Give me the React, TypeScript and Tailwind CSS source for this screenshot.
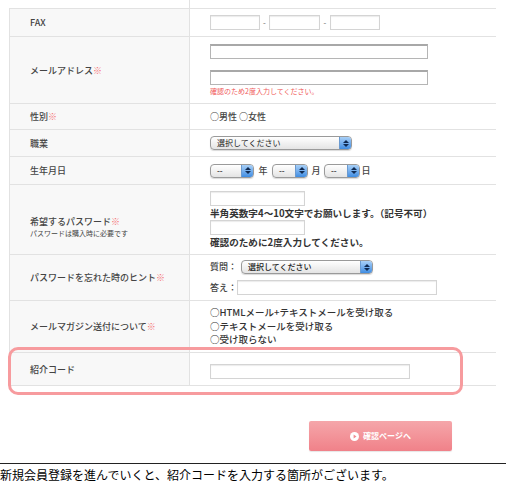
import { ReactNode } from 'react';

const jp = { fontFamily: '"Noto Sans CJK JP", "Noto Sans", sans-serif' };

function Req() {
  return <span className="text-[#f56f72]">※</span>;
}

function TextBox({ w }: { w: string }) {
  return <div className={`${w} h-[15px] bg-white border border-[#d4d4d4] shadow-[inset_0_1px_1px_rgba(0,0,0,0.08)]`} />;
}

function AquaSelect({ w, label }: { w: string; label: string }) {
  return (
    <div
      className={`${w} h-[14px] flex items-center rounded-[4px] border border-[#9a9a9a] bg-gradient-to-b from-white to-[#e4e4e4] shadow-[0_1px_1px_rgba(0,0,0,0.15)] overflow-hidden`}
    >
      <span className="flex-1 pl-[6px] text-[8px] leading-none text-[#222]">{label}</span>
      <span className="w-[12px] h-full flex flex-col items-center justify-center gap-[1px] bg-gradient-to-b from-[#a8d0f7] to-[#3f8de2] border-l border-[#6a9ad0]">
        <svg width="6" height="3" viewBox="0 0 6 3">
          <path d="M0 3 L3 0 L6 3 Z" fill="#0f2a52" />
        </svg>
        <svg width="6" height="3" viewBox="0 0 6 3">
          <path d="M0 0 L3 3 L6 0 Z" fill="#0f2a52" />
        </svg>
      </span>
    </div>
  );
}

function Row({ h, label, children }: { h: string; label: ReactNode; children: ReactNode }) {
  return (
    <div className={`flex ${h} border-b border-[#e2e2e2]`}>
      <div className="w-[181px] shrink-0 bg-[#f8f8f8] border-l border-r border-[#e2e2e2] flex flex-col justify-center pl-[20px] text-[9px] leading-[13px] font-medium text-[#444]">
        {label}
      </div>
      <div className="flex-1 flex flex-col justify-center pl-[20px] text-[9.5px] text-[#333]">{children}</div>
    </div>
  );
}

export default function App() {
  return (
    <div className="relative w-[506px] h-[488px] bg-white overflow-hidden" style={jp}>
      <div className="pl-[9px] w-[496px]">
        <div className="flex h-[9px] border-b border-[#e2e2e2]">
          <div className="w-[181px] border-r border-[#e2e2e2]" />
        </div>

        <Row h="h-[28px]" label="FAX">
          <div className="flex items-center">
            <TextBox w="w-[50px]" />
            <span className="w-[9px] text-center text-[8px] text-[#666]">-</span>
            <TextBox w="w-[51px]" />
            <span className="w-[10px] text-center text-[8px] text-[#666]">-</span>
            <TextBox w="w-[50px]" />
          </div>
        </Row>

        <Row h="h-[67px]" label={<span>メールアドレス<Req /></span>}>
          <div className="flex flex-col">
            <div className="w-[218px] h-[15px] bg-white border border-[#b5b5b5] border-t-2 border-t-[#a8a8a8]" />
            <div className="w-[218px] h-[15px] mt-[11px] bg-white border border-[#b5b5b5] border-t-2 border-t-[#a8a8a8]" />
            <span className="mt-[2px] text-[7px] leading-[9px] text-[#f05a5a]">確認のため2度入力してください。</span>
          </div>
        </Row>

        <Row h="h-[26px]" label={<span>性別<Req /></span>}>
          <span className="text-[9px] font-medium text-[#444]">○男性 ○女性</span>
        </Row>

        <Row h="h-[27px]" label="職業">
          <AquaSelect w="w-[142px]" label="選択してください" />
        </Row>

        <Row h="h-[28px]" label="生年月日">
          <div className="flex items-center text-[9px] font-medium text-[#444]">
            <AquaSelect w="w-[44px]" label="--" />
            <span className="w-[18px] text-center">年</span>
            <AquaSelect w="w-[36px]" label="--" />
            <span className="w-[16px] text-center">月</span>
            <AquaSelect w="w-[36px]" label="--" />
            <span className="w-[12px] text-center">日</span>
          </div>
        </Row>

        <Row
          h="h-[70px]"
          label={
            <>
              <span className="mt-[14px]">希望するパスワード<Req /></span>
              <span className="text-[7px] leading-[11px] font-normal">パスワードは購入時に必要です</span>
            </>
          }
        >
          <div className="flex flex-col font-bold text-[9.6px] leading-[14px] text-[#333]">
            <TextBox w="w-[95px]" />
            <span>半角英数字4〜10文字でお願いします。（記号不可）</span>
            <TextBox w="w-[95px]" />
            <span>確認のために2度入力してください。</span>
          </div>
        </Row>

        <Row h="h-[46px]" label={<span>パスワードを忘れた時のヒント<Req /></span>}>
          <div className="flex flex-col gap-[6px] text-[9px] font-medium text-[#444]">
            <div className="flex items-center">
              <span className="w-[31px]">質問：</span>
              <AquaSelect w="w-[132px]" label="選択してください" />
            </div>
            <div className="flex items-center">
              <span className="w-[27px]">答え：</span>
              <TextBox w="w-[200px]" />
            </div>
          </div>
        </Row>

        <Row h="h-[52px]" label={<span>メールマガジン送付について<Req /></span>}>
          <div className="flex flex-col text-[9.5px] leading-[13.5px] text-[#333] font-medium">
            <span>○HTMLメール+テキストメールを受け取る</span>
            <span>○テキストメールを受け取る</span>
            <span>○受け取らない</span>
          </div>
        </Row>

        <Row h="h-[33px]" label="紹介コード">
          <div className="pt-[4px]">
            <TextBox w="w-[200px]" />
          </div>
        </Row>
      </div>

      <div className="absolute left-[8px] top-[347px] w-[455px] h-[48px] rounded-[10px] border-[3px] border-[#f79b9e]" />

      <div className="flex justify-end pr-[54px] mt-[35px]">
        <div className="w-[143px] h-[30px] rounded-[2px] bg-gradient-to-b from-[#f5a6aa] to-[#f08189] shadow-[0_1px_1px_rgba(0,0,0,0.1)] flex items-center justify-center gap-[4px]">
          <svg width="9" height="9" viewBox="0 0 10 10">
            <circle cx="5" cy="5" r="5" fill="white" />
            <path d="M4 2.8 L7.2 5 L4 7.2 Z" fill="#f08a90" />
          </svg>
          <span className="text-[8px] font-bold text-white">確認ページへ</span>
        </div>
      </div>

      <div className="mt-[12px] border-t border-[#222] pt-[2px] text-[12px] leading-[18px] text-black">
        新規会員登録を進んでいくと、紹介コードを入力する箇所がございます。
      </div>
    </div>
  );
}
